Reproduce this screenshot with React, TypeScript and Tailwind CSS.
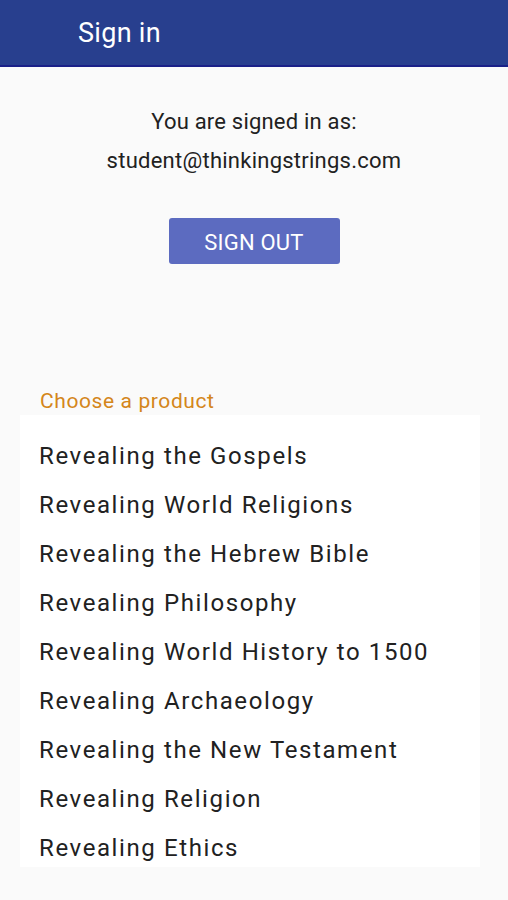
import React from "react";

const items = [
  "Revealing the Gospels",
  "Revealing World Religions",
  "Revealing the Hebrew Bible",
  "Revealing Philosophy",
  "Revealing World History to 1500",
  "Revealing Archaeology",
  "Revealing the New Testament",
  "Revealing Religion",
  "Revealing Ethics",
];

export default function App() {
  return (
    <div
      className="w-[508px] h-[900px] bg-[#fafafa] overflow-hidden flex flex-col"
      style={{ fontFamily: "Roboto, 'Liberation Sans', sans-serif" }}
    >
      <div className="h-[67px] shrink-0 bg-[#283f8e] border-b-2 border-[#1a2088] flex items-center pl-[78px]">
        <span className="text-white text-[27px] tracking-[0.3px] leading-none pt-[1px]">Sign in</span>
      </div>
      <div className="flex flex-col items-center mt-[35px]">
        <div className="text-[22px] tracking-[0.2px] leading-[39px] text-[#212121]">You are signed in as:</div>
        <div className="text-[22px] tracking-[0.25px] leading-[39px] text-[#212121]">student@thinkingstrings.com</div>
        <button className="mt-[38px] w-[171px] h-[46px] rounded-[3px] bg-[#5c6bc0] text-white text-[22px] tracking-[0.2px] leading-none flex items-center justify-center pt-[3px]">
          SIGN OUT
        </button>
      </div>
      <div className="mt-[123px] pl-[40px] text-[21px] tracking-[0.6px] leading-[28px] text-[#d4861a]">
        Choose a product
      </div>
      <div className="mx-[20px] w-[460px] h-[452px] bg-white overflow-hidden pt-[16px] flex flex-col">
        {items.map((t) => (
          <div
            key={t}
            className="h-[49px] shrink-0 flex items-center pl-[19px] text-[24px] text-[#212121] tracking-[1.6px]"
          >
            {t}
          </div>
        ))}
      </div>
    </div>
  );
}
